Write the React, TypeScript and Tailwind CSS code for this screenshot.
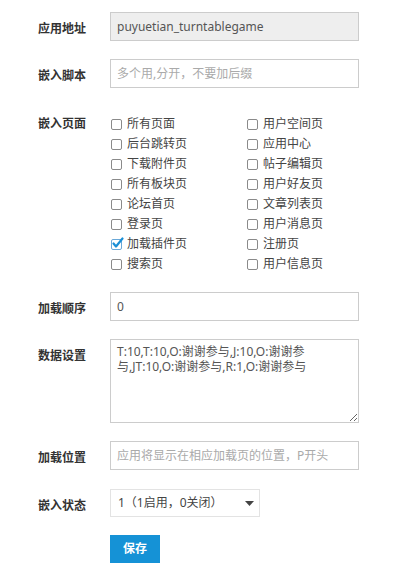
import React from "react";

const font = { fontFamily: '"Noto Sans", "Noto Sans CJK SC", sans-serif' };

function Box({ checked }: { checked?: boolean }) {
  if (checked) {
    return (
      <svg width="14" height="14" viewBox="0 0 14 14" className="shrink-0 -mt-[2px]">
        <rect x="1.5" y="3.5" width="10" height="10" rx="1.5" fill="white" stroke="#6aa8d8" />
        <path d="M3.5 7.5 L6 10.5 L12.5 2.5" fill="none" stroke="#1a8fd6" strokeWidth="2.2" strokeLinecap="round" strokeLinejoin="round" />
      </svg>
    );
  }
  return (
    <svg width="14" height="14" viewBox="0 0 14 14" className="shrink-0 -mt-[2px]">
      <rect x="1.5" y="3.5" width="10" height="10" rx="1.5" fill="white" stroke="#8a8a8a" />
    </svg>
  );
}

const left = ["所有页面", "后台跳转页", "下载附件页", "所有板块页", "论坛首页", "登录页", "加载插件页", "搜索页"];
const right = ["用户空间页", "应用中心", "帖子编辑页", "用户好友页", "文章列表页", "用户消息页", "注册页", "用户信息页"];

function Label({ children }: { children: React.ReactNode }) {
  return (
    <div className="w-[72px] shrink-0 font-bold text-[12px] text-[#333] pt-[7px] leading-[20px]">{children}</div>
  );
}

export default function App() {
  return (
    <div className="w-[407px] h-[580px] bg-white text-[12px]" style={font}>
      <div className="pl-[38px] pt-[12px] flex flex-col">
        <div className="flex items-start">
          <Label>应用地址</Label>
          <div className="w-[249px] h-[29px] border border-[#cccccc] bg-[#eeeeee] flex items-center px-[6px] text-[#555]">
            puyuetian_turntablegame
          </div>
        </div>
        <div className="flex items-start mt-[18px]">
          <Label>嵌入脚本</Label>
          <div className="w-[249px] h-[29px] border border-[#cccccc] bg-white flex items-center px-[6px] text-[#aaa]">
            多个用,分开，不要加后缀
          </div>
        </div>
        <div className="flex mt-[26px]">
          <div className="w-[72px] shrink-0 font-bold text-[12px] text-[#333] h-[20px] leading-[20px]">嵌入页面</div>
          <div className="grid grid-cols-[136px_136px]">
            {left.map((l, i) => (
              <React.Fragment key={i}>
                <div className="h-[20px] flex items-center gap-[3px] text-[#444]">
                  <Box checked={i === 6} />
                  <span>{l}</span>
                </div>
                <div className="h-[20px] flex items-center gap-[3px] text-[#444]">
                  <Box />
                  <span>{right[i]}</span>
                </div>
              </React.Fragment>
            ))}
          </div>
        </div>
        <div className="flex items-start mt-[18px]">
          <Label>加载顺序</Label>
          <div className="w-[249px] h-[29px] border border-[#cccccc] bg-white flex items-center px-[6px] text-[#555]">
            0
          </div>
        </div>
        <div className="flex items-start mt-[18px]">
          <Label>数据设置</Label>
          <textarea
            readOnly
            className="w-[249px] h-[84px] border border-[#cccccc] bg-white px-[6px] py-[4px] text-[#555] leading-[15px] text-[12px] outline-none block"
            style={font}
            defaultValue="T:10,T:10,O:谢谢参与,J:10,O:谢谢参与,JT:10,O:谢谢参与,R:1,O:谢谢参与"
          />
        </div>
        <div className="flex items-start mt-[18px]">
          <Label>加载位置</Label>
          <div className="w-[249px] h-[29px] border border-[#cccccc] bg-white flex items-center px-[6px] text-[#aaa]">
            应用将显示在相应加载页的位置，P开头
          </div>
        </div>
        <div className="flex items-start mt-[19px]">
          <Label>嵌入状态</Label>
          <div className="w-[150px] h-[28px] border border-[#e3e3e3] bg-white flex items-center justify-between pl-[7px] pr-[5px] text-[#444]">
            <span>1（1启用，0关闭）</span>
            <svg width="9" height="5" viewBox="0 0 9 5">
              <path d="M0 0 L9 0 L4.5 5 Z" fill="#444" />
            </svg>
          </div>
        </div>
        <div className="flex mt-[18px]">
          <div className="w-[72px] shrink-0" />
          <button className="w-[50px] h-[28px] bg-[#1592d6] text-white text-[12px] font-bold">保存</button>
        </div>
      </div>
    </div>
  );
}
